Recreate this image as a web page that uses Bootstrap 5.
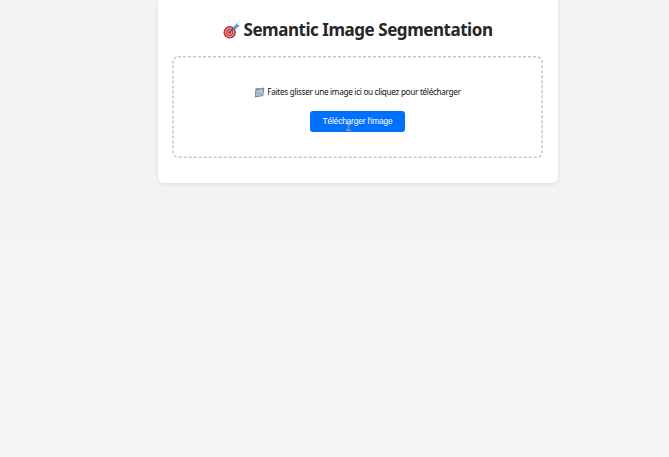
<!DOCTYPE html>
<html lang="fr">
<head>
<meta charset="utf-8">
<meta name="viewport" content="width=device-width, initial-scale=1">
<title>Semantic Image Segmentation</title>
<link href="https://cdn.jsdelivr.net/npm/bootstrap@5.3.0/dist/css/bootstrap.min.css" rel="stylesheet">
<style>
body{background:linear-gradient(#f3f3f3 240px,#f5f5f5 240px);height:457px;overflow:hidden;font-family:"Noto Sans",sans-serif;color:#111}
.panel{width:400px;height:183px;margin-left:158px;padding:18px 15px 25px 14px;border-radius:0 0 6px 6px;box-shadow:0 1px 4px rgba(0,0,0,.1)}
.title{font-size:17px;letter-spacing:-.46px;line-height:24px;margin-bottom:14px;color:#262626;white-space:nowrap}
.title svg{width:17px;height:17px;margin-right:4px}
.drop{width:371px;height:102px;padding-top:29px}
.outline{left:0;top:0;width:371px;height:102px}
.hint{font-size:8.2px;letter-spacing:-.31px;line-height:14px;margin-bottom:12px;white-space:nowrap}
.hint svg{width:11px;height:11px;margin-right:2px}
.upload{width:95px;height:21px;padding:0;border:0;border-radius:3px;background:#0070ff;font:8.4px/21px "Liberation Sans",Arial,sans-serif;letter-spacing:-.18px}
.pointer{left:35px;top:13px;width:7px;height:7px}
</style>
<script src="https://cdn.jsdelivr.net/npm/bootstrap@5.3.0/dist/js/bootstrap.bundle.min.js"></script>
</head>
<body>
<main class="panel bg-white">
<h1 class="title fw-bold d-flex align-items-center justify-content-center">
<svg viewBox="0 0 17 17" aria-hidden="true"><circle cx="6.7" cy="10.3" r="6.2" fill="#c42e3a"/><circle cx="6.7" cy="10.3" r="4.2" fill="none" stroke="#eed5d5" stroke-width=".9"/><circle cx="6.7" cy="10.3" r="2.1" fill="none" stroke="#eed5d5" stroke-width=".8"/><path d="M7 10 13 4" stroke="#35677c" stroke-width="1.2"/><path d="m10.5 5.2 3.7-4.5.4 2.2 2.2.3-4.1 4.1-2-.3z" fill="#48a9cc"/></svg>
<span>Semantic Image Segmentation</span></h1>
<section class="drop position-relative d-flex flex-column align-items-center">
<svg class="outline position-absolute" viewBox="0 0 371 102" aria-hidden="true"><rect x="1" y=".8" width="369" height="100.4" rx="5" fill="none" stroke="#c8c8c8" stroke-width="1.5" stroke-dasharray="3 2"/></svg>
<p class="hint d-flex align-items-center">
<svg viewBox="0 0 11 11" aria-hidden="true"><path d="M1.5 1.5 5 .9l.8.7L10.4.5 9.2 9 .8 10.4z" fill="#70808a"/><path d="m2.3 3 7.1-1.2-.9 6.6-7 1z" fill="#a9b8c2"/><path d="m3 4.3 5-.9-.3 2z" fill="#c5d1d8"/></svg>
<span>Faites glisser une image ici ou cliquez pour télécharger</span></p>
<button type="button" class="upload btn btn-primary position-relative">Télécharger l'image
<svg class="pointer position-absolute" viewBox="0 0 7 8" aria-hidden="true"><path d="M1.5.7h1.3l.7.6.7-.6h1.3M3.5 1v5.7M.8 7.2h5.4" fill="none" stroke="#d5d5d5" stroke-width="1.5"/><path d="M1.5.7h1.3l.7.6.7-.6h1.3M3.5 1v5.7M1.2 7.2h4.6" fill="none" stroke="#5d5b58" stroke-width=".8"/></svg></button>
</section>
</main>
</body>
</html>
